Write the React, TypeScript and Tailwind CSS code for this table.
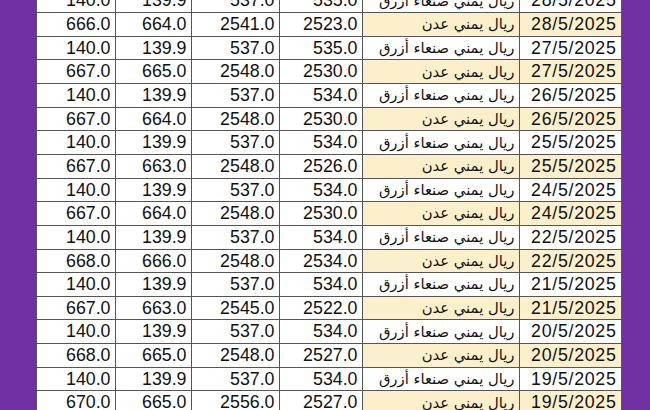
import React from "react";

type Row = {
  a: string;
  b: string;
  c: string;
  d: string;
  aden: boolean;
  date: string;
};

const rows: Row[] = [
  { a: "140.0", b: "139.9", c: "537.0", d: "535.0", aden: false, date: "28/5/2025" },
  { a: "666.0", b: "664.0", c: "2541.0", d: "2523.0", aden: true, date: "28/5/2025" },
  { a: "140.0", b: "139.9", c: "537.0", d: "535.0", aden: false, date: "27/5/2025" },
  { a: "667.0", b: "665.0", c: "2548.0", d: "2530.0", aden: true, date: "27/5/2025" },
  { a: "140.0", b: "139.9", c: "537.0", d: "534.0", aden: false, date: "26/5/2025" },
  { a: "667.0", b: "664.0", c: "2548.0", d: "2530.0", aden: true, date: "26/5/2025" },
  { a: "140.0", b: "139.9", c: "537.0", d: "534.0", aden: false, date: "25/5/2025" },
  { a: "667.0", b: "663.0", c: "2548.0", d: "2526.0", aden: true, date: "25/5/2025" },
  { a: "140.0", b: "139.9", c: "537.0", d: "534.0", aden: false, date: "24/5/2025" },
  { a: "667.0", b: "664.0", c: "2548.0", d: "2530.0", aden: true, date: "24/5/2025" },
  { a: "140.0", b: "139.9", c: "537.0", d: "534.0", aden: false, date: "22/5/2025" },
  { a: "668.0", b: "666.0", c: "2548.0", d: "2534.0", aden: true, date: "22/5/2025" },
  { a: "140.0", b: "139.9", c: "537.0", d: "534.0", aden: false, date: "21/5/2025" },
  { a: "667.0", b: "663.0", c: "2545.0", d: "2522.0", aden: true, date: "21/5/2025" },
  { a: "140.0", b: "139.9", c: "537.0", d: "534.0", aden: false, date: "20/5/2025" },
  { a: "668.0", b: "665.0", c: "2548.0", d: "2527.0", aden: true, date: "20/5/2025" },
  { a: "140.0", b: "139.9", c: "537.0", d: "534.0", aden: false, date: "19/5/2025" },
  { a: "670.0", b: "665.0", c: "2556.0", d: "2527.0", aden: true, date: "19/5/2025" },
];

const cell =
  "flex items-center justify-end h-[23.65px] border-r-[1.5px] border-b-[1.5px] border-[#555] pr-[4px] overflow-hidden whitespace-nowrap";

export default function App() {
  return (
    <div className="flex h-[410px] w-[650px] overflow-hidden bg-[#7130a3]">
      <div className="w-[36px] shrink-0" />
      <div className="mt-[-10.5px] w-[586px] shrink-0 self-start bg-white border-l-[1.5px] border-[#555] font-['Liberation_Sans',Arial,sans-serif] text-[17.8px] text-[#111]">
        <div className="grid grid-cols-[78.5px_76px_88px_83px_157px_102px]">
          {rows.map((r, i) => (
            <React.Fragment key={i}>
              <div className={cell}>{r.a}</div>
              <div className={cell}>{r.b}</div>
              <div className={cell}>{r.c}</div>
              <div className={cell}>{r.d}</div>
              <div
                dir="rtl"
                className={`${cell} justify-start pr-[3px] font-['DejaVu_Sans',sans-serif] text-[14.8px] ${
                  r.aden ? "bg-[#fcefcb]" : ""
                }`}
              >
                {r.aden ? "ريال يمني عدن" : "ريال يمني صنعاء أزرق"}
              </div>
              <div
                className={`${cell} pr-[1px] tracking-[0.7px] ${r.aden ? "bg-[#fcefcb]" : ""}`}
              >
                {r.date}
              </div>
            </React.Fragment>
          ))}
        </div>
      </div>
      <div className="flex-1" />
    </div>
  );
}
